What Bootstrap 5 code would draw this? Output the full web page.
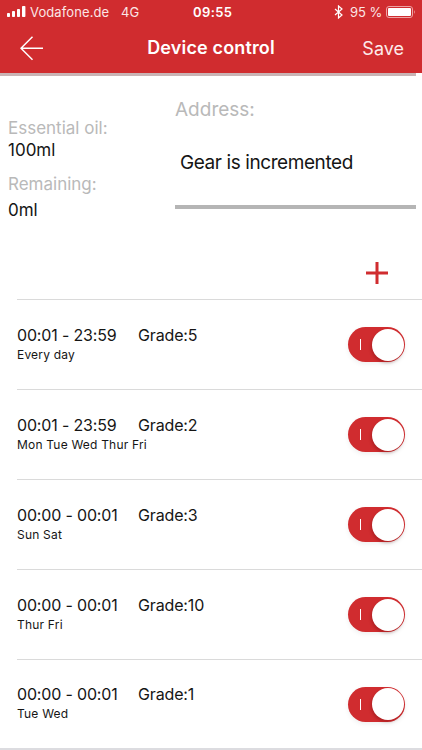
<!DOCTYPE html>
<html lang="en">
<head>
<meta charset="utf-8">
<meta name="viewport" content="width=device-width, initial-scale=1">
<title>Device control</title>
<link href="https://cdn.jsdelivr.net/npm/bootstrap@5.3.0/dist/css/bootstrap.min.css" rel="stylesheet">
<style>
body{font-family:Inter,"Liberation Sans",sans-serif;color:#151515;width:422px;height:750px;overflow:hidden;background:#fff}
svg{display:block;flex:none}
.top-area{background:#d02c2f;height:73px;color:#fff}
.status{height:24px;font-size:13px;line-height:24px;padding:0 7px;color:#fbe6e6}
.status>*{flex:none}
.carrier{width:91px;margin-left:3px;letter-spacing:.1px}
.network{width:72px}
.clock{font-weight:600;letter-spacing:.4px;color:#fff;width:141px}
.percent{width:36px;margin-left:7px}
.title-bar{height:49px;line-height:47px}
.page-title{font-size:18px;font-weight:600;letter-spacing:.15px}
.back-btn,.save-btn{width:90px;line-height:47px;border:0}
.save-btn{font-size:18px;padding:0 18px 0 0;color:#fdeaea}
.edge{height:3px;width:416px;background:#c9b4b5}
.info{height:177px}
.facts{width:175px;padding:42px 0 0 8px;font-size:17px;line-height:20px}
.facts .oil{padding-top:2px}
.facts .rem{padding-top:14px}
.facts .left-over{padding-top:6px}
.hint{color:#b9b9b9}
.addr{width:241px;height:133px;border-bottom:4px solid #b5b5b5;font-size:19px;line-height:24px;padding-top:22px}
.addr .value{padding:29px 0 0 5px;letter-spacing:-.42px}
.add-row{height:46px;padding:9px 34px 0 0}
.schedule{margin-left:17px}
.slot{height:90px;border-top:1px solid #dadada;padding-right:17px}
.slot .times{font-size:16px;line-height:20px;width:121px;white-space:nowrap;letter-spacing:-.17px}
.slot .grade{font-size:16px;line-height:20px;letter-spacing:-.15px}
.slot .days{font-size:12px;line-height:20px;letter-spacing:.2px}
.slot .form-check-input{width:57px;height:35px;margin:0;border:0;background-color:#d02c2f;background-image:none;position:relative;border-radius:18px;box-shadow:0 2px 5px #0001}
.slot .form-check-input::before{content:"";position:absolute;left:12px;top:12px;width:1px;height:11px;background:#fff}
.slot .form-check-input::after{content:"";position:absolute;right:1px;top:1.5px;width:32px;height:32px;border-radius:50%;background:#fff;box-shadow:-1px 2px 3px #5004}
.slot:last-child{height:89px}
.end-line{height:2px;background:#dcdce0}
</style>
</head>
<body>
<header class="top-area">
  <div class="status d-flex align-items-center">
    <svg width="20" height="12" viewBox="0 0 20 12" fill="#fff"><rect x="0" y="7" width="3" height="4" rx=".8"/><rect x="5" y="5" width="3" height="6" rx=".8"/><rect x="10" y="3" width="3" height="8" rx=".8"/><rect x="15" y="0" width="3.4" height="11" rx=".8"/></svg>
    <span class="carrier">Vodafone.de</span><span class="network">4G</span><span class="clock">09:55</span>
    <svg width="9" height="14" viewBox="0 0 9 14" fill="none" stroke="#fff" stroke-width="1.2"><path d="M1 4l7 6-3.5 3V1L8 4l-7 6"/></svg>
    <span class="percent">95 %</span>
    <svg width="30" height="12" viewBox="0 0 30 12"><rect x=".5" y=".5" width="26" height="11" rx="2.5" fill="none" stroke="#eda3a4"/><rect x="2" y="2" width="23" height="8" rx="1" fill="#fff"/><path d="M28 4q1.8 2 0 4z" fill="#eda3a4"/></svg>
  </div>
  <nav class="title-bar d-flex justify-content-between">
    <button class="back-btn btn p-0 ps-3" aria-label="Back"><svg class="ms-1" width="25" height="25" viewBox="0 0 25 25" fill="none" stroke="#fff" stroke-width="1.5"><path d="M12.5.8L1 12.3l11.5 11.4M1 12.3h22"/></svg></button>
    <div class="page-title">Device control</div>
    <button class="save-btn btn text-end">Save</button>
  </nav>
</header>
<main>
  <div class="edge"></div>
  <section class="info d-flex">
    <div class="facts">
      <div class="hint">Essential oil:</div>
      <div class="oil">100ml</div>
      <div class="hint rem">Remaining:</div>
      <div class="left-over">0ml</div>
    </div>
    <div class="addr">
      <div class="hint">Address:</div>
      <div class="value">Gear is incremented</div>
    </div>
  </section>
  <div class="add-row d-flex justify-content-end"><svg width="22" height="22" viewBox="0 0 22 22" stroke="#d02c2f" stroke-width="3"><path d="M11 0v22M0 11h22"/></svg></div>
  <section class="schedule">
    <div class="slot d-flex justify-content-between align-items-center"><div><div class="d-flex"><span class="times">00:01 - 23:59</span><span class="grade">Grade:5</span></div><div class="days">Every day</div></div><div class="form-check form-switch p-0 m-0"><input class="form-check-input" type="checkbox" role="switch" checked aria-label="Every day"></div></div>
    <div class="slot d-flex justify-content-between align-items-center"><div><div class="d-flex"><span class="times">00:01 - 23:59</span><span class="grade">Grade:2</span></div><div class="days">Mon Tue Wed Thur Fri</div></div><div class="form-check form-switch p-0 m-0"><input class="form-check-input" type="checkbox" role="switch" checked aria-label="Weekdays"></div></div>
    <div class="slot d-flex justify-content-between align-items-center"><div><div class="d-flex"><span class="times">00:00 - 00:01</span><span class="grade">Grade:3</span></div><div class="days">Sun Sat</div></div><div class="form-check form-switch p-0 m-0"><input class="form-check-input" type="checkbox" role="switch" checked aria-label="Sun Sat"></div></div>
    <div class="slot d-flex justify-content-between align-items-center"><div><div class="d-flex"><span class="times">00:00 - 00:01</span><span class="grade">Grade:10</span></div><div class="days">Thur Fri</div></div><div class="form-check form-switch p-0 m-0"><input class="form-check-input" type="checkbox" role="switch" checked aria-label="Thur Fri"></div></div>
    <div class="slot d-flex justify-content-between align-items-center"><div><div class="d-flex"><span class="times">00:00 - 00:01</span><span class="grade">Grade:1</span></div><div class="days">Tue Wed</div></div><div class="form-check form-switch p-0 m-0"><input class="form-check-input" type="checkbox" role="switch" checked aria-label="Tue Wed"></div></div>
  </section>
  <div class="end-line"></div>
</main>
<script src="https://cdn.jsdelivr.net/npm/bootstrap@5.3.0/dist/js/bootstrap.bundle.min.js"></script>
</body>
</html>
